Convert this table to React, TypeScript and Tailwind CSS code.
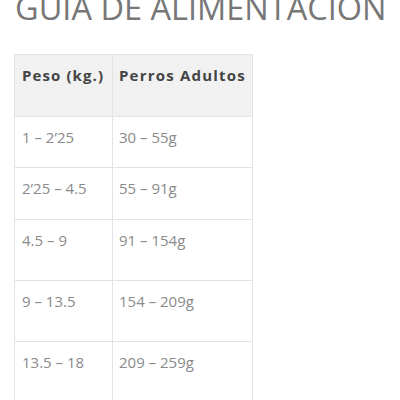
import React from 'react';

const filas = [
  { peso: '1 – 2’25', adultos: '30 – 55g', h: 'h-[51px]' },
  { peso: '2’25 – 4.5', adultos: '55 – 91g', h: 'h-[52px]' },
  { peso: '4.5 – 9', adultos: '91 – 154g', h: 'h-[61px]' },
  { peso: '9 – 13.5', adultos: '154 – 209g', h: 'h-[61px]' },
  { peso: '13.5 – 18', adultos: '209 – 259g', h: 'h-[61px]' },
];

const App: React.FC = () => {
  return (
    <div className="w-[400px] h-[400px] overflow-hidden bg-white font-['Open_Sans',sans-serif]">
      <h1 className="mt-[-8px] pl-[15px] text-[32.5px] leading-[32px] font-normal text-[#777] whitespace-nowrap">
        GUIA DE ALIMENTACION
      </h1>
      <table className="mt-[30px] ml-[14px] w-[239px] border-collapse text-[15px] leading-6">
        <thead>
          <tr className="h-[62px] bg-[#f1f1f1]">
            <th className="w-[98px] border border-[#e3e3e3] align-top pt-[8px] pl-[7px] text-left font-bold tracking-[1.1px] text-[#444]">
              Peso (kg.)
            </th>
            <th className="border border-[#e3e3e3] align-top pt-[8px] pl-[6px] text-left font-bold tracking-[1.2px] text-[#444]">
              Perros Adultos
            </th>
          </tr>
        </thead>
        <tbody>
          {filas.map((fila, i) => (
            <tr key={i} className={fila.h}>
              <td className="border border-[#e3e3e3] align-top pt-[8px] pl-[7px] text-[#8a8a8a]">{fila.peso}</td>
              <td className="border border-[#e3e3e3] align-top pt-[8px] pl-[6px] text-[#8a8a8a]">{fila.adultos}</td>
            </tr>
          ))}
        </tbody>
      </table>
    </div>
  );
};

export default App;
